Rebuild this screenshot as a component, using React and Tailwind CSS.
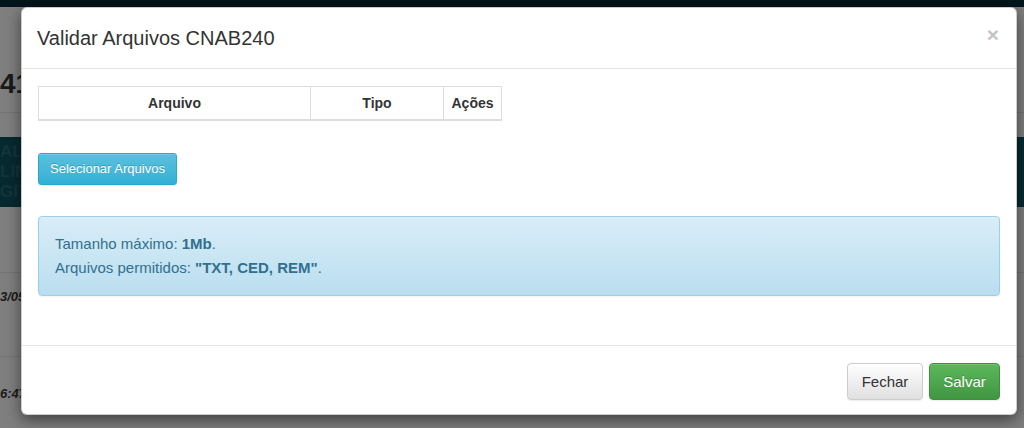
import React from "react";

const font = { fontFamily: '"Liberation Sans", Arial, sans-serif' };

const App = () => {
  return (
    <div className="relative w-[1024px] h-[428px] overflow-hidden bg-[#7f7f7f]" style={font}>
      {/* page behind the backdrop (already dimmed) */}
      <div className="flex flex-col">
        <div className="h-[7px] bg-[#02151b]" />
        <div className="h-[106px] border-b border-[#747474] flex items-start pt-[62px]">
          <span className="text-[28px] leading-[30px] font-bold text-[#1a1a1a]">41</span>
        </div>
        <div className="h-[24px]" />
        <div className="h-[70px] bg-[#062a30] flex flex-col justify-center text-[17px] leading-[20px] font-bold text-[#143539]">
          <span>ALI</span>
          <span>LIN</span>
          <span>GIT</span>
        </div>
        <div className="h-[66px] border-b border-[#747474]" />
        <div className="h-[84px] border-b border-[#747474] flex items-start pt-[16px]">
          <span className="text-[13px] leading-[15px] font-bold italic text-[#1a1a1a]">3/05</span>
        </div>
        <div className="h-[72px] flex items-start pt-[29px]">
          <span className="text-[13px] leading-[15px] font-bold italic text-[#1a1a1a]">6:47</span>
        </div>
      </div>

      {/* modal */}
      <div className="absolute left-[21px] top-[7px] w-[996px] h-[408px] bg-white rounded-[6px] border border-black/20 shadow-[0_5px_15px_rgba(0,0,0,0.5)] flex flex-col">
        <div className="h-[61px] border-b border-[#e5e5e5] flex items-center justify-between pl-[15px] pr-[17px]">
          <h4 className="text-[20px] leading-[30px] text-[#333]">Validar Arquivos CNAB240</h4>
          <span className="text-[21px] leading-none font-bold text-[#c4c4c4] -mt-[8px]">×</span>
        </div>

        <div className="flex-1 pt-[17px] px-[16px]">
          <table className="border border-[#ddd] border-collapse text-[14px] text-[#333]">
            <thead>
              <tr className="border-b-2 border-[#ddd]">
                <th className="w-[272px] py-[6px] leading-[20px] font-bold text-center border-r border-[#ddd]">Arquivo</th>
                <th className="w-[133px] py-[6px] leading-[20px] font-bold text-center border-r border-[#ddd]">Tipo</th>
                <th className="w-[58px] py-[6px] leading-[20px] font-bold text-center">Ações</th>
              </tr>
            </thead>
          </table>

          <button className="mt-[32px] h-[32px] px-[11px] text-[13px] leading-[18px] text-white rounded-[3px] border border-[#2aa9d0] bg-gradient-to-b from-[#5bc0de] to-[#31b0d5] shadow-[inset_0_1px_0_rgba(255,255,255,0.15),0_1px_1px_rgba(0,0,0,0.075)] [text-shadow:0_-1px_0_rgba(0,0,0,0.2)]">
            Selecionar Arquivos
          </button>

          <div className="mt-[31px] w-[962px] rounded-[4px] border border-[#9acfea] bg-gradient-to-b from-[#d9edf7] to-[#b9def0] px-[16px] py-[15px] text-[15px] leading-[24px] text-[#31708f] shadow-[inset_0_1px_0_rgba(255,255,255,0.25),0_1px_2px_rgba(0,0,0,0.05)]">
            <div>
              Tamanho máximo: <b>1Mb</b>.
            </div>
            <div>
              Arquivos permitidos: <b>"TXT, CED, REM"</b>.
            </div>
          </div>
        </div>

        <div className="h-[69px] border-t border-[#e5e5e5] flex justify-end items-start pt-[17px] pr-[16px] gap-[6px]">
          <button className="w-[76px] h-[37px] text-[15px] leading-[21px] text-[#333] rounded-[4px] border border-[#ccc] bg-gradient-to-b from-white to-[#e0e0e0] shadow-[inset_0_1px_0_rgba(255,255,255,0.15),0_1px_1px_rgba(0,0,0,0.075)]">
            Fechar
          </button>
          <button className="w-[71px] h-[37px] text-[15px] leading-[21px] text-white rounded-[4px] border border-[#3e8f3e] bg-gradient-to-b from-[#5cb85c] to-[#419641] shadow-[inset_0_1px_0_rgba(255,255,255,0.15),0_1px_1px_rgba(0,0,0,0.075)] [text-shadow:0_-1px_0_rgba(0,0,0,0.2)]">
            Salvar
          </button>
        </div>
      </div>
    </div>
  );
};

export default App;
